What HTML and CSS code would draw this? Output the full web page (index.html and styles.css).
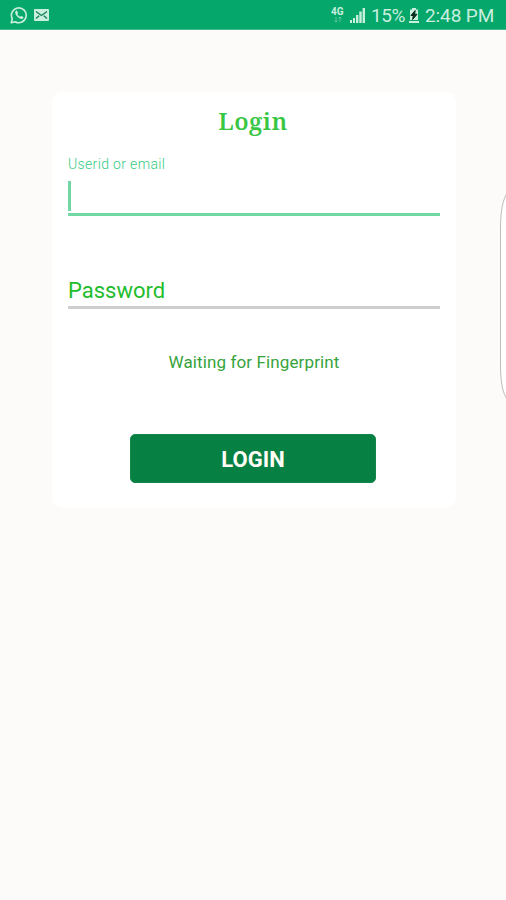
FILE: index.html
```html
<!DOCTYPE html>
<html lang="en">
<head>
<meta charset="utf-8">
<title>Login</title>
<link rel="stylesheet" href="styles.css">
</head>
<body>
<header class="status">
  <svg class="whatsapp" viewBox="0 0 18 18" width="18" height="18"><path d="M1.2 16.8 2.3 12.8A7.4 7.4 0 1 1 5.1 15.7Z" fill="none" stroke="currentColor" stroke-width="1.6" stroke-linejoin="round"/><path d="M6.1 4.7c-1.5 1-1.2 3.4 1.1 5.8s4.800 3.200 6 1.700c.5-.8.2-1.200-.3-1.500l-1.400-.7c-.5-.2-.7 0-1.200.8-1.300-.4-2.400-1.500-3-2.700.7-.7.8-.9.600-1.400l-.6-1.500c-.3-.6-.6-.7-1.200-.5Z" fill="currentColor"/></svg>
  <svg class="mail" viewBox="0 0 15 12" width="15" height="12"><rect width="15" height="12" rx="1" fill="currentColor"/><path d="m2 2.500 5.500 4L13 2.500M2 9.500l3.200-2.800m4.600 0L13 9.500" fill="none" stroke="#177f59" stroke-width="1.400"/></svg>
  <div class="right">
    <div class="network"><span>4G</span><svg viewBox="0 0 10 6" width="10" height="6"><path d="M3 0v5M1.500 3.500 3 5l1.500-1.500M7 5V0M5.500 1.500 7 0l1.500 1.500" fill="none" stroke="currentColor" stroke-width=".8" opacity=".5"/></svg></div>
    <svg class="signal" viewBox="0 0 16 16" width="16" height="16"><path d="M0 16v-3h2v3zm3 0v-5h2v5zm3 0V8h2.400v8zm3.300 0V4.500h2.400V16zm3.300 0V1H15v15z" fill="currentColor"/></svg>
    <span class="percent">15%</span>
    <svg class="battery" viewBox="0 0 10 15" width="10" height="15"><path d="M3 0h4v1.500h2V12H1V1.500h2zM0 13h10v2H0z" fill="currentColor"/><path d="M6.200 2.500 2 7.500h2.400L3.600 11.500 8 6.300H5.600z" fill="#06291c" stroke="#06291c"/></svg>
    <span class="clock">2:48 PM</span>
  </div>
</header>
<main class="card">
  <h1>Login</h1>
  <label class="user-label">Userid or email</label>
  <div class="field active"><span class="caret"></span></div>
  <div class="field password"><span>Password</span></div>
  <p>Waiting for Fingerprint</p>
  <button>LOGIN</button>
</main>
<svg class="edge" viewBox="0 0 7 212" width="7" height="212"><path d="M8 5C4 12 1.500 22 1.500 40V176C1.500 192 3 204 8 211" fill="#fefefe" stroke="#bdbdbb" stroke-width="1"/></svg>
</body>
</html>
```
FILE: styles.css
```css
* { box-sizing: border-box; }
body {
  margin: 0;
  height: 900px;
  overflow: hidden;
  background: #fcfbf9;
  font-family: Roboto, sans-serif;
}
svg { display: block; flex: none; }
.status {
  height: 30px;
  padding: 1px 12px 0 10px;
  display: flex;
  align-items: center;
  background: #05a76b;
  border-bottom: 1px solid #45bb8d;
  color: #c9efdf;
}
.mail { margin-left: 6px; }
.right { margin-left: auto; display: flex; align-items: center; }
.network {
  width: 14px;
  margin-right: 5px;
  font-size: 10px;
  font-weight: 700;
  line-height: 9px;
}
.network svg { margin: 1px 0 0 2px; }
.percent { margin-left: 5px; padding-top: 1px; font-size: 19px; line-height: 26px; width: 34px; letter-spacing: -.4px; }
.battery { margin-left: 4px; }
.clock { margin-left: 6px; padding-top: 1px; font-size: 19px; line-height: 26px; width: 69px; white-space: nowrap; letter-spacing: -.1px; }
.card {
  width: 404px;
  height: 416px;
  margin: 62px 0 0 52px;
  padding: 13px 16px 25px;
  border-radius: 10px;
  background: #fff;
  display: flex;
  flex-direction: column;
}
h1 {
  margin: 0 2px 0 0;
  text-align: center;
  font-family: "Noto Serif", "DejaVu Serif Condensed", "DejaVu Serif", serif;
  font-size: 24px;
  line-height: 32px;
  font-weight: 600;
  letter-spacing: .5px;
  color: #3ac645;
}
.user-label {
  margin-top: 18px;
  font-size: 14px;
  line-height: 18px;
  font-weight: 300;
  letter-spacing: .35px;
  color: #35cc84;
}
.field { border-bottom: 3px solid #72d8a3; width: 372px; }
.active { height: 43px; padding-top: 8px; }
.caret { display: block; width: 3px; height: 30px; background: #72d8a3; }
.password {
  height: 93px;
  padding-top: 61px;
  border-color: #cecece;
  color: #22bd2d;
  font-size: 22px;
  line-height: 28px;
}
p {
  margin: 41px 0 0;
  text-align: center;
  font-size: 17px;
  line-height: 24px;
  letter-spacing: .12px;
  color: #37a33c;
}
button {
  width: 246px;
  height: 49px;
  margin: auto 0 0 62px;
  padding: 2px 0 0;
  border: 1px solid #15864a;
  border-radius: 5px;
  background: #078044;
  color: #fffdf5;
  font: 700 22px/30px Roboto, sans-serif;
}
.edge { position: absolute; right: 0; top: 188px; }
```
